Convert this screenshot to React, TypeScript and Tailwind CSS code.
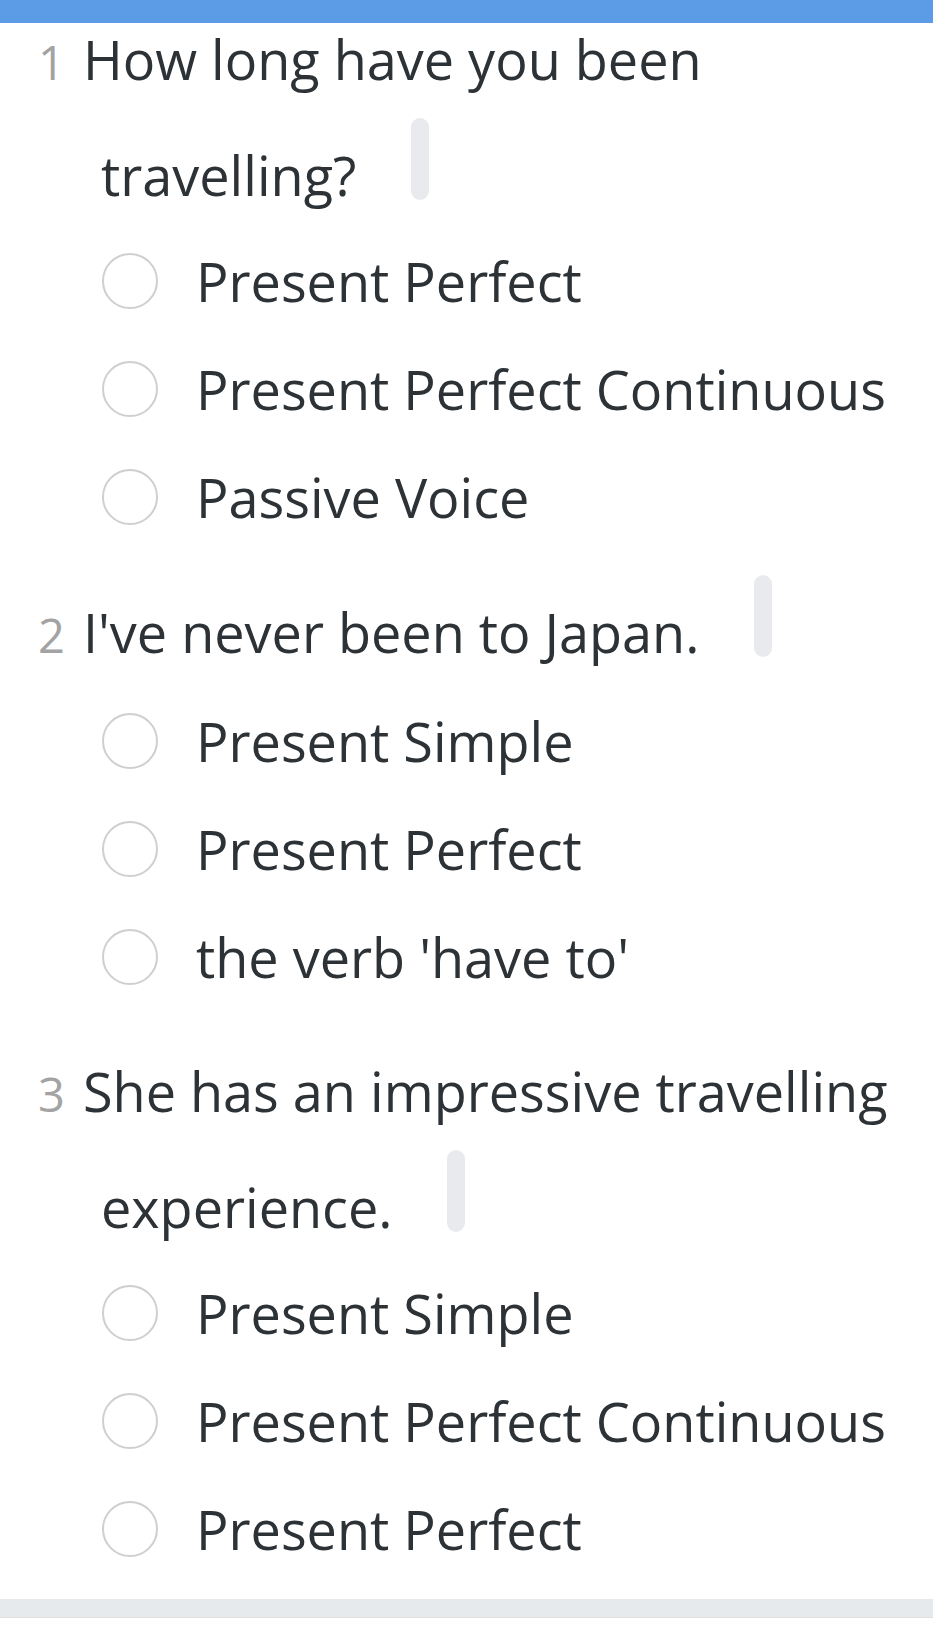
import React from "react";

type Q = { n: number; text: string; options: string[] };

const questions: Q[] = [
  {
    n: 1,
    text: "How long have you been travelling?",
    options: ["Present Perfect", "Present Perfect Continuous", "Passive Voice"],
  },
  {
    n: 2,
    text: "I've never been to Japan.",
    options: ["Present Simple", "Present Perfect", "the verb 'have to'"],
  },
  {
    n: 3,
    text: "She has an impressive travelling experience.",
    options: ["Present Simple", "Present Perfect Continuous", "Present Perfect"],
  },
];

function Question({ q, first }: { q: Q; first: boolean }) {
  return (
    <div className={first ? "" : "mt-[24px]"}>
      <p className="pl-[101px] pr-[20px] indent-[-63px] text-[54px] leading-[112px] text-[#2d3236]">
        <span className="mr-[4px] text-[47px] text-[#a3a3a3]">{q.n}</span> {q.text}
        <span className="ml-[55px] inline-block h-[82px] w-[18px] rounded-full bg-[#e8eaee] align-[-4px]" />
      </p>
      <div className="mt-[-4px] flex flex-col">
        {q.options.map((o, i) => (
          <label key={i} className="flex h-[108px] items-center pl-[102px]">
            <span className="box-border h-[56px] w-[56px] shrink-0 rounded-full border-[2.5px] border-[#cfcfcf] bg-white" />
            <span className="ml-[38px] whitespace-nowrap text-[54px] leading-[108px] text-[#2d3236]">
              {o}
            </span>
          </label>
        ))}
      </div>
    </div>
  );
}

export default function App() {
  return (
    <div
      className="min-h-[1639px] w-[933px] bg-white"
      style={{ fontFamily: '"Open Sans", "Noto Sans", sans-serif' }}
    >
      <div className="relative z-10 h-[23px] w-full bg-[#5c9ce7]" />
      <div className="mt-[-20px]">
        {questions.map((q, i) => (
          <Question key={q.n} q={q} first={i === 0} />
        ))}
      </div>
      <div className="mt-[16px] h-[19px] w-full border-b border-[#e0e0e0] bg-[#e7eaed]" />
    </div>
  );
}
